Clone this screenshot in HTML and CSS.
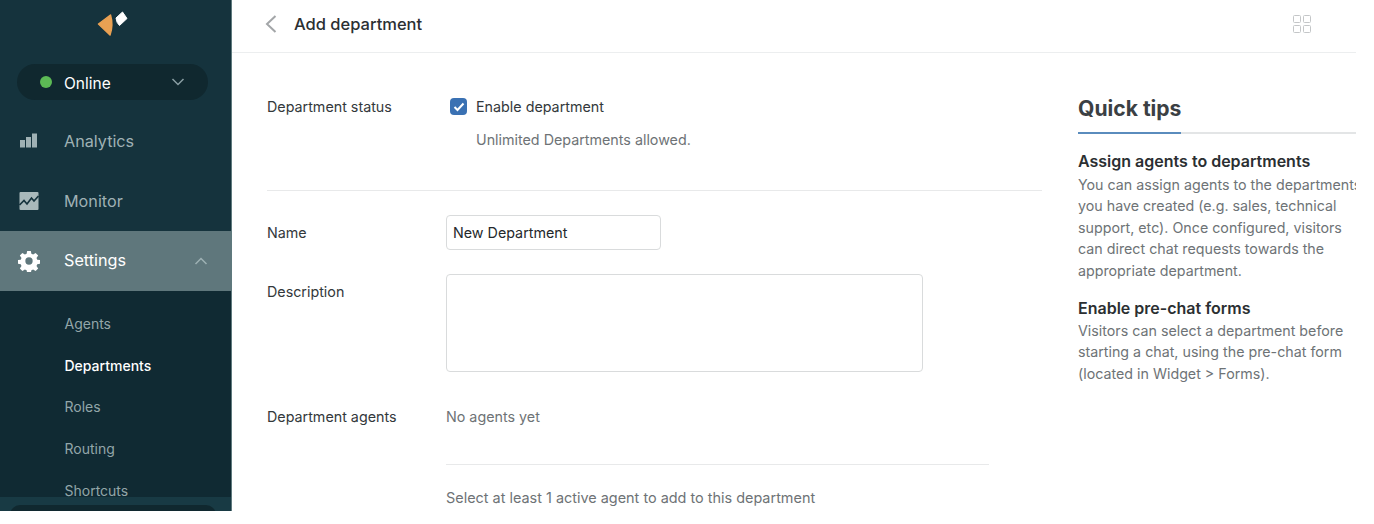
FILE: index.html
```html
<!DOCTYPE html>
<html lang="en">
<head>
<meta charset="utf-8">
<title>Add department</title>
<link rel="stylesheet" href="styles.css">
</head>
<body>
<div class="app">
  <aside class="sidebar">
    <div class="logo">
      <svg width="32" height="26" viewBox="0 0 32 26"><path d="M2.500 14 L14.500 5 Q17.500 15 14 25 Z" fill="#e9a153" stroke="#e9a153" stroke-width="1.500" stroke-linejoin="round"/><path d="M20 8 L26.500 2 L31 8.500 L23.500 15.500 Q20.500 13 20 8 Z" fill="#ffffff" stroke="#ffffff" stroke-linejoin="round"/></svg>
    </div>
    <div class="status">
      <span class="dot"></span>
      <span class="status-label">Online</span>
      <svg class="chev" width="14" height="8" viewBox="0 0 14 8"><path d="M1.500 1 L7 6.500 L12.500 1" fill="none" stroke="#8a9ea3" stroke-width="1.500"/></svg>
    </div>
    <nav class="nav">
      <div class="nav-item">
        <svg class="nav-icon" width="20" height="20" viewBox="0 0 20 20"><path d="M1 9h5v7.500H1zM7 6h5v10.500H7zM13 2.500h5v14h-5z" fill="#9fb1b4"/></svg>
        <span>Analytics</span>
      </div>
      <div class="nav-item">
        <svg class="nav-icon" width="20" height="20" viewBox="0 0 20 20"><rect x="0.500" y="1" width="19" height="18" rx="1" fill="#a9b9bb"/><path d="M0.500 14 L5 9.500 L8 13 L12.500 7 L15 10 L19.500 5" fill="none" stroke="#15333d" stroke-width="1.700"/></svg>
        <span>Monitor</span>
      </div>
      <div class="nav-item active">
        <svg class="nav-icon" width="22" height="22" viewBox="0 0 24 24"><path fill="#fff" fill-rule="evenodd" d="M10 1h4l.6 3.200 1.900.8 2.700-1.800 2.800 2.800-1.800 2.700.8 1.900 3 .4v4l-3 .6-.8 1.900 1.800 2.700-2.800 2.800-2.700-1.800-1.900.8-.6 3.100h-4l-.6-3.100-1.900-.8-2.700 1.800-2.800-2.800 1.800-2.700-.8-1.900-3.200-.6v-4l3.200-.4.8-1.900L2 6l2.800-2.800 2.700 1.800 1.900-.8zM12 8a4 4 0 1 0 0 8 4 4 0 0 0 0-8z"/></svg>
        <span class="active-label">Settings</span>
        <svg class="chev" width="14" height="8" viewBox="0 0 14 8"><path d="M1.500 7 L7 1.500 L12.500 7" fill="none" stroke="#9db0b3" stroke-width="1.500"/></svg>
      </div>
    </nav>
    <div class="subnav">
      <div class="sub-item">Agents</div>
      <div class="sub-item current">Departments</div>
      <div class="sub-item">Roles</div>
      <div class="sub-item">Routing</div>
      <div class="sub-item">Shortcuts</div>
    </div>
    <div class="sidebar-foot"><div class="foot-pill"></div></div>
  </aside>
  <main class="main">
    <header class="topbar">
      <svg class="back" width="14" height="20" viewBox="0 0 14 20"><path d="M11.500 2 L3 10 L11.500 18" fill="none" stroke="#a3a6a8" stroke-width="2"/></svg>
      <h1 class="title">Add department</h1>
      <svg class="grid-icon" width="18" height="18" viewBox="0 0 18 18"><g fill="none" stroke="#c4c6c8"><rect x="0.500" y="0.500" width="7" height="7" rx="1"/><rect x="10.500" y="0.500" width="7" height="7" rx="1"/><rect x="0.500" y="10.500" width="7" height="7" rx="1"/><rect x="10.500" y="10.500" width="7" height="7" rx="1"/></g></svg>
    </header>
    <div class="content">
      <section class="form">
        <div class="row status-row">
          <div class="label">Department status</div>
          <div class="field">
            <label class="check-line">
              <span class="checkbox"><svg width="12" height="10" viewBox="0 0 12 10"><path d="M1.500 5 L4.500 8 L10.500 1.500" fill="none" stroke="#fff" stroke-width="2"/></svg></span>
              <span>Enable department</span>
            </label>
            <p class="hint">Unlimited Departments allowed.</p>
          </div>
        </div>
        <div class="row name-row">
          <div class="label">Name</div>
          <div class="input">New Department</div>
        </div>
        <div class="row desc-row">
          <div class="label">Description</div>
          <div class="textarea"></div>
        </div>
        <div class="row agents-row">
          <div class="label">Department agents</div>
          <div class="agents">
            <div class="muted empty">No agents yet</div>
            <div class="muted select-note">Select at least 1 active agent to add to this department</div>
          </div>
        </div>
      </section>
      <aside class="tips">
        <div class="tips-head"><h2 class="tips-title">Quick tips</h2></div>
        <h3 class="tip-title">Assign agents to departments</h3>
        <p class="tip-text">You can assign agents to the departments<br>you have created (e.g. sales, technical<br>support, etc). Once configured, visitors<br>can direct chat requests towards the<br>appropriate department.</p>
        <h3 class="tip-title second">Enable pre-chat forms</h3>
        <p class="tip-text">Visitors can select a department before<br>starting a chat, using the pre-chat form<br>(located in Widget &gt; Forms).</p>
      </aside>
    </div>
  </main>
</div>
</body>
</html>
```

FILE: styles.css
```css
* { box-sizing: border-box; }
html, body { margin: 0; padding: 0; background: #fff; }
body { font-family: Inter, "Liberation Sans", sans-serif; color: #2f3437; overflow: hidden; }
.app { display: flex; width: 1356px; height: 511px; overflow: hidden; }

.sidebar { width: 232px; flex: none; display: flex; flex-direction: column; background: #15333d; position: relative; overflow: hidden; border-right: 1px solid #5f7a7e; }
.logo { height: 65px; padding: 10px 0 0 96px; }
.logo svg { display: block; }
.status { height: 36px; margin: 0 23px 0 17px; padding: 0 23px; background: #10282f; border-radius: 18px; display: flex; align-items: center; color: #fff; font-size: 15.500px; }
.dot { width: 12px; height: 12px; border-radius: 50%; background: #5cba55; margin-right: 12px; }
.status-label { flex: 1; padding-top: 3px; }
.nav { margin-top: 11px; }
.nav-item { height: 60px; padding: 0 23px 0 18px; display: flex; align-items: center; font-size: 16.200px; color: #9fb1b4; }
.nav-icon { width: 22px; margin-right: 24px; flex: none; }
.nav-item span { flex: 1; }
.nav-item .active-label { padding-bottom: 1px; }
.nav-item.active { background: #5f777c; color: #fff; }
.subnav { flex: 1; background: #102a33; padding-top: 12px; }
.sub-item { height: 41.700px; padding-left: 64.500px; display: flex; align-items: center; font-size: 14px; color: #93a6a9; }
.sub-item.current { color: #fff; font-weight: 500; }
.sidebar-foot { position: absolute; left: 0; right: 0; bottom: 0; height: 14px; background: #183a44; padding: 8px 15px 0 10px; }
.foot-pill { height: 20px; background: #10282f; border-radius: 10px 10px 0 0; }

.main { flex: 1; min-width: 0; display: flex; flex-direction: column; }
.topbar { height: 53px; flex: none; border-bottom: 1px solid #eceeef; display: flex; align-items: center; padding: 0 45px 5px 32px; }
.back { margin-right: 16px; flex: none; }
.title { flex: 1; margin: 0; font-size: 16.500px; font-weight: 500; color: #2b2f32; }
.content { flex: 1; display: flex; padding-left: 35px; min-height: 0; }

.form { width: 775px; flex: none; font-size: 14.300px; }
.row { display: flex; }
.label { width: 179px; flex: none; color: #33383b; }
.status-row { height: 138px; padding-top: 45px; border-bottom: 1px solid #e8e9ea; }
.status-row .label { width: 183px; }
.field { flex: 1; }
.check-line { display: flex; align-items: center; color: #33383b; height: 18px; margin-top: -1px; }
.checkbox { width: 17px; height: 17px; border-radius: 4px; background: #3a71b3; display: flex; align-items: center; justify-content: center; margin: 1px 9px 0 0; }
.hint { margin: 16px 0 0 26px; color: #6e7376; line-height: 18px; }
.name-row { margin-top: 24px; height: 35px; align-items: center; }
.input { width: 215px; height: 35px; border: 1px solid #d9dbdc; border-radius: 4px; padding: 0 6px; display: flex; align-items: center; color: #24282b; }
.desc-row { margin-top: 24px; }
.desc-row .label { padding-top: 9px; }
.textarea { width: 477px; height: 98px; border: 1px solid #d9dbdc; border-radius: 4px; }
.agents-row { margin-top: 36px; }
.agents { width: 543px; }
.muted { color: #6e7376; }
.empty { height: 57px; border-bottom: 1px solid #e8e9ea; }
.select-note { margin-top: 24px; font-size: 14.430px; }

.tips { width: 278px; flex: none; margin-left: 36px; padding-top: 41px; overflow: hidden; }
.tips-head { border-bottom: 2px solid #e3e5e6; height: 40px; }
.tips-title { display: inline-block; margin: 0; height: 40px; font-size: 21.100px; font-weight: 700; line-height: 30px; color: #3b4043; border-bottom: 2px solid #5a8cbd; }
.tip-title { margin: 17px 0 0; font-size: 16px; font-weight: 600; line-height: 20px; color: #2b2f32; white-space: nowrap; }
.tip-title.second { margin-top: 17px; }
.tip-text { margin: 3px 0 0; font-size: 14.250px; line-height: 21.400px; color: #6e7376; white-space: nowrap; }
.tip-title.second + .tip-text { margin-top: 2px; }
```
